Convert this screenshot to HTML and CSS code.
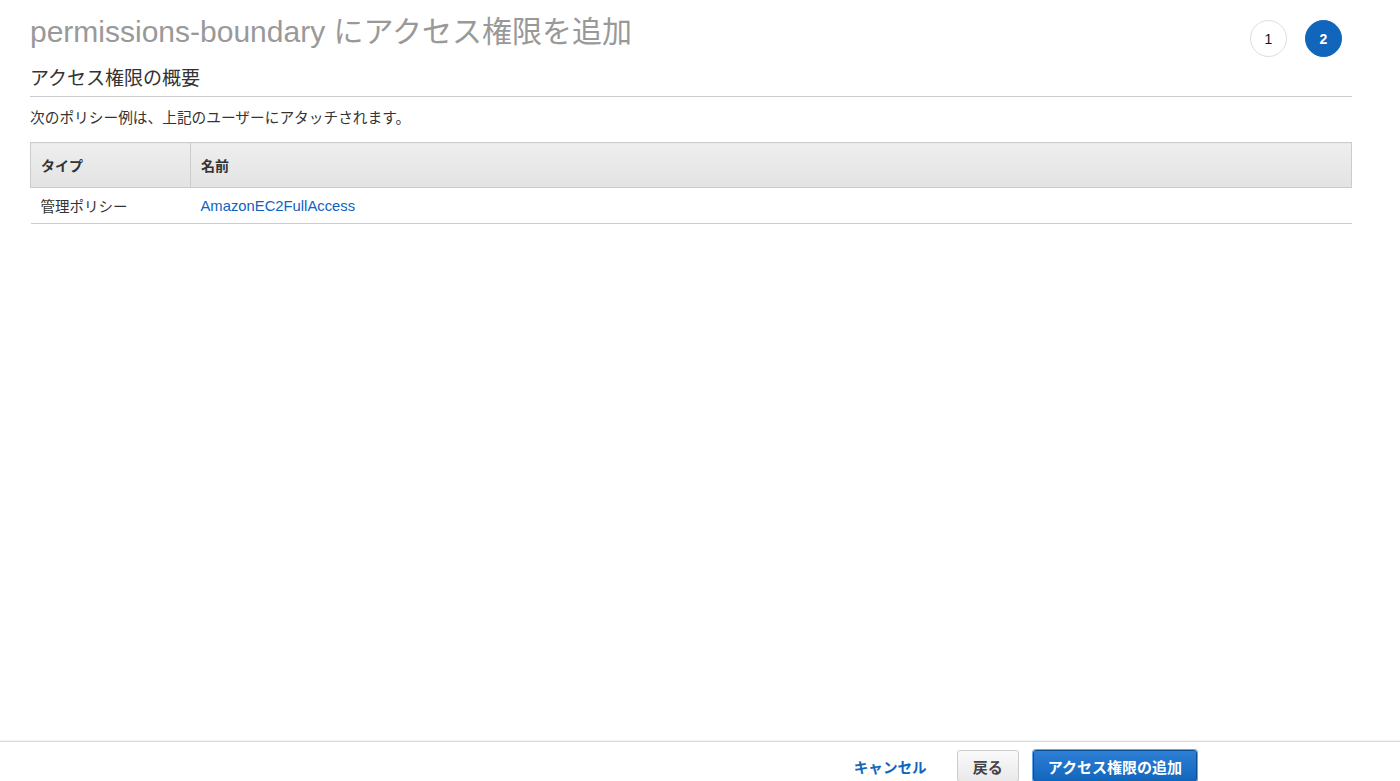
FILE: index.html
```html
<!DOCTYPE html>
<html lang="ja">
<head>
<meta charset="utf-8">
<link rel="stylesheet" href="styles.css">
</head>
<body>
<div class="page">
  <main class="content">
    <div class="top">
      <h1 class="title">permissions-boundary にアクセス権限を追加</h1>
      <div class="steps">
        <span class="step">1</span>
        <span class="step active">2</span>
      </div>
    </div>
    <h2 class="section">アクセス権限の概要</h2>
    <p class="desc">次のポリシー例は、上記のユーザーにアタッチされます。</p>
    <table class="tbl">
      <thead>
        <tr><th class="c1">タイプ</th><th>名前</th></tr>
      </thead>
      <tbody>
        <tr><td class="c1">管理ポリシー</td><td><a class="link" href="#">AmazonEC2FullAccess</a></td></tr>
      </tbody>
    </table>
  </main>
  <footer class="footer">
    <a class="cancel" href="#">キャンセル</a>
    <button class="btn">戻る</button>
    <button class="btn primary">アクセス権限の追加</button>
  </footer>
</div>
</body>
</html>
```
FILE: styles.css
```css
* { box-sizing: border-box; }
html, body { margin: 0; padding: 0; height: 100%; background: #fff; }
body {
  font-family: "Liberation Sans", "Noto Sans CJK JP", sans-serif;
  color: #333;
  font-size: 14px;
}
.page {
  height: 781px;
  display: flex;
  flex-direction: column;
  overflow: hidden;
}
.content {
  flex: 1;
  padding: 0 48px 0 30px;
}
.top {
  display: flex;
  justify-content: space-between;
  align-items: flex-start;
}
.title {
  margin: 14px 0 0;
  font-size: 30px;
  font-weight: normal;
  color: #999;
  line-height: 36px;
}
.steps {
  display: flex;
  gap: 18px;
  margin-top: 20px;
  margin-right: 10px;
}
.step {
  width: 37px;
  height: 37px;
  border-radius: 50%;
  border: 1px solid #ddd;
  display: flex;
  align-items: center;
  justify-content: center;
  font-size: 14px;
  color: #111;
}
.step.active {
  background: #1166bb;
  border-color: #1166bb;
  color: #fff;
  font-weight: bold;
}
.section {
  margin: 9px 0 0;
  font-size: 19px;
  font-weight: normal;
  color: #333;
  line-height: 26px;
  padding-bottom: 4px;
  border-bottom: 1px solid #ccc;
}
.desc {
  margin: 11px 0 0;
  line-height: 20px;
  font-size: 14.7px;
}
.tbl {
  margin-top: 14px;
  width: 100%;
  border-collapse: collapse;
}
.tbl th {
  text-align: left;
  font-weight: bold;
  font-size: 14px;
  color: #333;
  height: 45px;
  padding: 0 10px;
  background: linear-gradient(#eee, #e3e3e3);
  border: 1px solid #ccc;
}
.tbl th.c1 { width: 160px; }
.tbl td {
  height: 36px;
  padding: 0 10px;
  border-bottom: 1px solid #ccc;
  font-size: 14.5px;
}
.link {
  color: #0f63c0;
  text-decoration: none;
  font-size: 14.8px;
}
.footer {
  height: 40px;
  border-top: 1px solid #ddd;
  box-shadow: 0 -1px 0 #f2f2f2;
  display: flex;
  justify-content: flex-end;
  align-items: flex-start;
  padding: 8px 203px 0 0;
}
.cancel {
  color: #1166bb;
  font-weight: bold;
  text-decoration: none;
  font-size: 14.6px;
  margin-top: 6px;
  margin-right: 30px;
}
.btn {
  font-family: inherit;
  font-size: 15px;
  font-weight: bold;
  height: 32px;
  padding: 0 15px;
  border-radius: 3px;
  border: 1px solid #ccc;
  background: linear-gradient(#fafafa, #e9e9e9);
  color: #444;
  margin-right: 14px;
}
.btn.primary {
  margin-right: 0;
  background: linear-gradient(#2e7fd6, #1166bb);
  border: 1px solid #0b4d91;
  box-shadow: 0 0 0 1px #6aa7e6;
  color: #fff;
  padding: 0 14px;
}
```
